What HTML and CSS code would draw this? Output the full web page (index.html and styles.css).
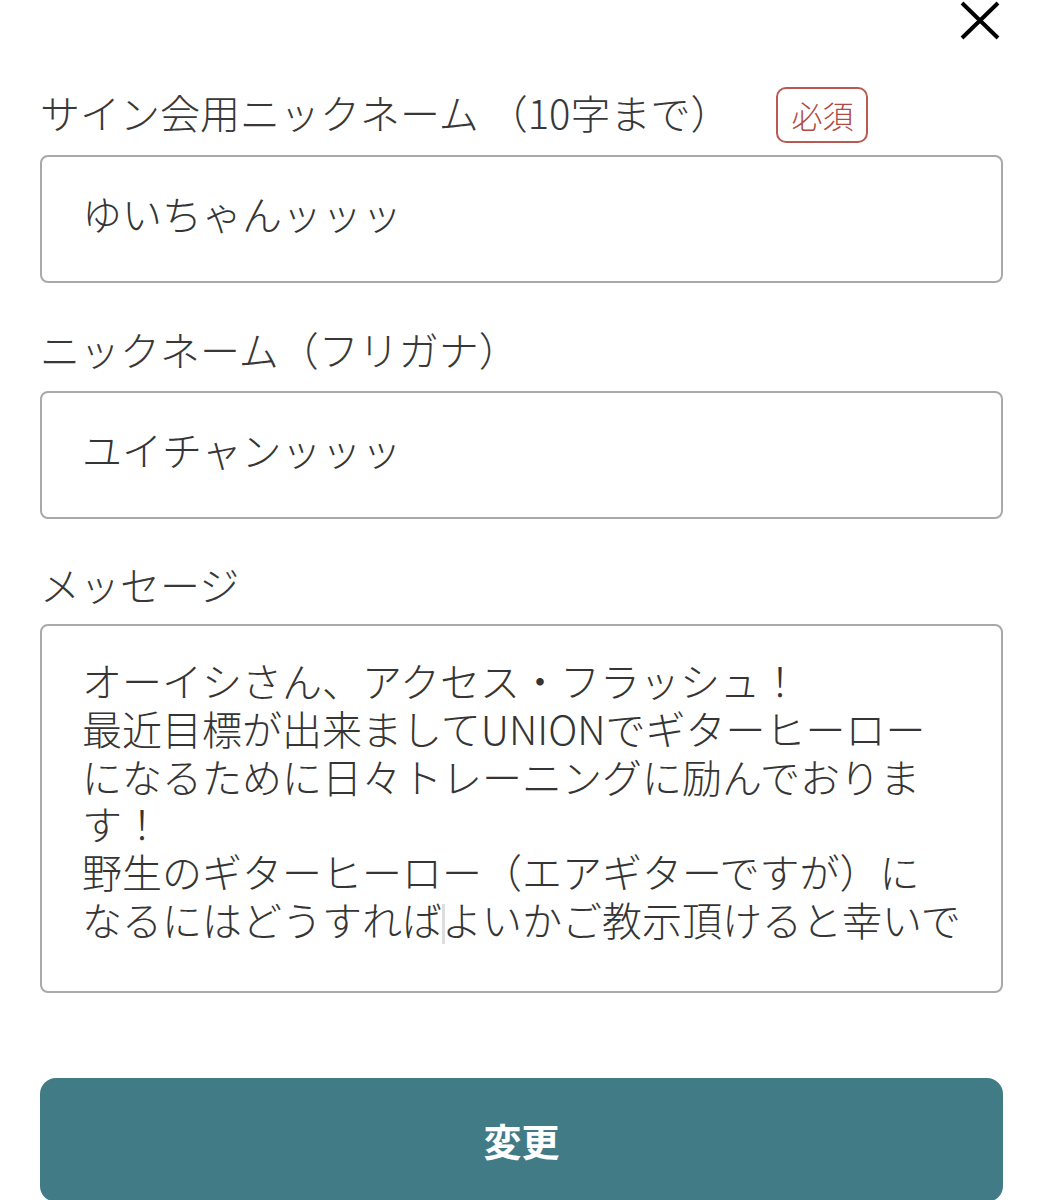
FILE: index.html
```html
<!DOCTYPE html>
<html lang="ja">
<head>
<meta charset="utf-8">
<title>サイン会用ニックネーム</title>
<link rel="stylesheet" href="styles.css">
</head>
<body>
<div class="page">
  <div class="header">
    <svg class="close" width="40" height="40" viewBox="0 0 40 40" aria-label="閉じる">
      <path d="M2 3 L38 38 M38 3 L2 38" stroke="#000" stroke-width="4" fill="none"/>
    </svg>
  </div>

  <div class="label-row">
    <span class="label">サイン会用ニックネーム （10字まで）</span>
    <span class="badge">必須</span>
  </div>
  <input class="field field-first" type="text" value="ゆいちゃんッッッ">

  <div class="label label-kana">ニックネーム（フリガナ）</div>
  <input class="field field-kana" type="text" value="ユイチャンッッッ">

  <div class="label label-message">メッセージ</div>
  <div class="textarea" role="textbox" aria-multiline="true">オーイシさん、アクセス・フラッシュ！<br>最近目標が出来ましてUNIONでギターヒーロー<br>になるために日々トレーニングに励んでおりま<br>す！<br>野生のギターヒーロー（エアギターですが）に<br>なるにはどうすれば<span class="caret"></span>よいかご教示頂けると幸いで</div>

  <button class="submit" type="button">変更</button>
</div>
</body>
</html>
```

FILE: styles.css
```css
html, body {
  margin: 0;
  padding: 0;
  background: #ffffff;
}

body {
  font-family: "Noto Sans CJK JP", "Noto Sans", sans-serif;
  font-weight: 300;
  color: #353535;
}

.page {
  padding: 0 41px 0 40px;
  display: flex;
  flex-direction: column;
}

.header {
  display: flex;
  justify-content: flex-end;
  height: 40px;
}

.close {
  display: block;
  margin-right: 3px;
}

.label {
  font-size: 40px;
  line-height: 52px;
  color: #383838;
  white-space: nowrap;
}

.label-row {
  display: flex;
  align-items: center;
  margin-top: 47px;
  height: 56px;
}

.label-row .label {
  margin-top: -6px;
}

.badge {
  box-sizing: border-box;
  height: 56px;
  margin-left: 46px;
  padding: 0 13px 2px;
  border: 2px solid #b85a50;
  border-radius: 10px;
  color: #b04b41;
  font-size: 31px;
  display: flex;
  align-items: center;
}

.label-kana {
  margin-top: 40px;
}

.label-message {
  margin-top: 39px;
}

.field {
  box-sizing: border-box;
  display: block;
  width: 100%;
  height: 128px;
  margin: 0;
  padding: 0 40px 12px;
  border: 2px solid #a9a9a9;
  border-radius: 8px;
  background: #fff;
  font-family: "Noto Sans CJK JP", "Noto Sans", sans-serif;
  font-weight: 300;
  font-size: 40px;
  color: #353535;
  outline: none;
}

.field-first {
  margin-top: 12px;
}

.field-kana {
  margin-top: 16px;
}

.textarea {
  box-sizing: border-box;
  width: 100%;
  height: 369px;
  margin-top: 14px;
  padding: 31px 40px 0;
  border: 2px solid #a9a9a9;
  border-radius: 8px;
  font-size: 40px;
  line-height: 47.8px;
  color: #353535;
  white-space: nowrap;
  overflow: hidden;
}

.caret {
  display: inline-block;
  width: 3px;
  height: 40px;
  margin-right: -3px;
  vertical-align: -8px;
  background: #dedede;
}

.submit {
  display: flex;
  align-items: center;
  justify-content: center;
  width: 100%;
  height: 124px;
  margin-top: 85px;
  border: none;
  border-radius: 16px;
  background: #417b86;
  color: #ffffff;
  font-family: "Noto Sans CJK JP", "Noto Sans", sans-serif;
  font-weight: 700;
  font-size: 38px;
  padding: 0 0 2px;
}
```
